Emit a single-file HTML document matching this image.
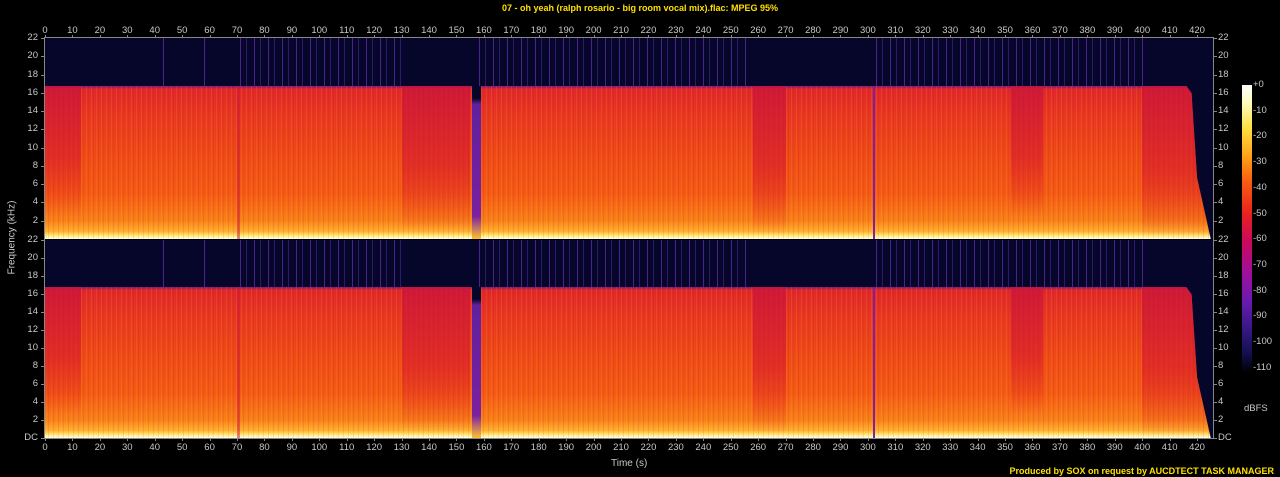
<!DOCTYPE html>
<html><head><meta charset="utf-8"><style>
body{margin:0;background:#000;width:1280px;height:477px;overflow:hidden;position:relative;font-family:"Liberation Sans",sans-serif}
.a{position:absolute}
.lb{position:absolute;color:#c8c8c8;font-size:9.5px;line-height:10px;white-space:nowrap}
.panel{position:absolute;left:45px;width:1168px;background:#06062a;overflow:hidden}
.sig{position:absolute;left:0;width:1168px;background:linear-gradient(to bottom,#7a1a80 0,#e02828 2%,#e83820 20%,#ee4a16 45%,#f45a14 70%,#f88018 88%,#ffb030 95%,#fff080 98%,#fff 100%)}
.stripe{position:absolute;top:0;bottom:0;background:repeating-linear-gradient(to right,transparent 0 1px,rgba(255,200,60,.12) 1px 2px,transparent 2px 3px,rgba(200,0,60,.12) 3px 4px,transparent 4px 5px)}
.red{position:absolute;top:0;background:linear-gradient(to bottom,rgba(200,20,60,.75),rgba(215,25,45,.6) 55%,rgba(225,40,30,.25) 85%,rgba(230,60,30,0))}
.pl{position:absolute;top:0;background:repeating-linear-gradient(to right,transparent 0 3px,#4a2488 3px 4px,transparent 4px 9px,#30186a 9px 10px,transparent 10px 14px)}
.tk{position:absolute;background:#888}
</style></head><body>
<div class="a" style="left:0;top:3px;width:1280px;text-align:center;color:#ffe000;font-size:9px;font-weight:bold">07 - oh yeah (ralph rosario - big room vocal mix).flac: MPEG 95%</div>
<div class="a" style="right:6px;top:466px;color:#ffe000;font-size:9px;font-weight:bold">Produced by SOX on request by AUCDTECT TASK MANAGER</div>
<div class="a" style="left:611px;top:458px;color:#c8c8c8;font-size:10px">Time (s)</div>
<div class="a" style="left:-28px;top:232px;width:80px;text-align:center;color:#c8c8c8;font-size:10px;transform:rotate(-90deg)">Frequency (kHz)</div>
<div id="P"></div>
<div class="a" style="left:1242px;top:85px;width:10px;height:288px;background:linear-gradient(to bottom,#fff 0,#fffcc0 6%,#ffe040 15%,#ffa018 25%,#f86010 33%,#e82020 45%,#c80860 55%,#a0109a 65%,#6a1ab0 75%,#3a1888 84%,#141050 93%,#000 100%)"></div>
<div class="lb" style="left:1244px;top:404px">dBFS</div>
<script>
var P=document.getElementById('P'),h='';
function px(t){return 45+t*2.743}
var panels=[[38,239],[240,438]];
panels.forEach(function(p,i){
 var y0=p[0],y1=p[1],H=y1-y0,k=H/22,sy=y1-16.8*k;
 h+='<div class="panel" style="top:'+y0+'px;height:'+H+'px">';
 h+='<div class="pl" style="left:'+(px(70)-45)+'px;width:'+(px(130)-px(70))+'px;height:'+(sy-y0)+'px"></div>';
 h+='<div class="pl" style="left:'+(px(157)-45)+'px;width:'+(px(256)-px(157))+'px;height:'+(sy-y0)+'px"></div>';
 h+='<div class="pl" style="left:'+(px(302)-45)+'px;width:'+(px(402)-px(302))+'px;height:'+(sy-y0)+'px"></div>';
 h+='<div class="a" style="left:'+(px(43)-45)+'px;width:1px;top:0;height:'+(sy-y0)+'px;background:#4a2488"></div><div class="a" style="left:'+(px(58)-45)+'px;width:1px;top:0;height:'+(sy-y0)+'px;background:#4a2488"></div>';
 var sh=y1-sy;
 h+='<div class="sig" style="top:'+(sy-y0)+'px;height:'+sh+'px;clip-path:polygon(0 0,'+(px(416)-45)+'px 0,'+(px(418)-45)+'px 5%,'+(px(420)-45)+'px 60%,'+(px(425)-45)+'px 100%,0 100%)"><div class="stripe" style="left:0;right:0"></div>';
 [[0,13,0.85],[130,155,0.95],[258,270,0.97],[352,364,0.85],[400,425,1]].forEach(function(r){
   h+='<div class="red" style="left:'+(px(r[0])-45)+'px;width:'+(px(r[1])-px(r[0]))+'px;height:'+(r[2]*100)+'%"></div>';});
 h+='<div class="a" style="left:'+(px(155.5)-45)+'px;width:9px;top:0;height:100%;background:linear-gradient(to bottom,#06062a 0 8%,#6020a0 12%,#7a20a0 85%,#ffc030 100%)"></div>';
 h+='<div class="a" style="left:'+(px(302)-45)+'px;width:2px;top:0;height:100%;background:#8020a0"></div>';
 h+='<div class="a" style="left:'+(px(70)-45)+'px;width:3px;top:0;height:100%;background:#c81838;opacity:.5"></div>';
 h+='</div></div>';
 for(var f=0;f<=22;f+=2){
  var y=y1-f*k; if(i==0&&f==0)continue;
  var t=(f==0?'DC':f);
  h+='<div class="lb" style="left:0;width:38px;text-align:right;top:'+(y-5)+'px">'+t+'</div>';
  h+='<div class="lb" style="left:1218px;top:'+(y-5)+'px">'+t+'</div>';
  h+='<div class="tk" style="left:41px;width:4px;height:1px;top:'+y+'px"></div><div class="tk" style="left:1213px;width:4px;height:1px;top:'+y+'px"></div>';
 }
});
for(var t=0;t<=420;t+=10){var x=px(t);
 h+='<div class="lb" style="left:'+(x-15)+'px;width:30px;text-align:center;top:26px">'+t+'</div>';
 h+='<div class="lb" style="left:'+(x-15)+'px;width:30px;text-align:center;top:443px">'+t+'</div>';
 h+='<div class="tk" style="left:'+x+'px;width:1px;height:3px;top:35px"></div><div class="tk" style="left:'+x+'px;width:1px;height:3px;top:438px"></div>';}
h+='<div class="a" style="left:44px;top:37px;width:1170px;height:402px;border:1px solid #888;box-sizing:border-box"></div>';
for(var d=0;d<=110;d+=10){var y=85+d*2.57;h+='<div class="lb" style="left:1253px;top:'+(y-5)+'px">'+(d==0?'+0':'-'+d)+'</div>';}
P.innerHTML=h;
</script>
</body></html>
